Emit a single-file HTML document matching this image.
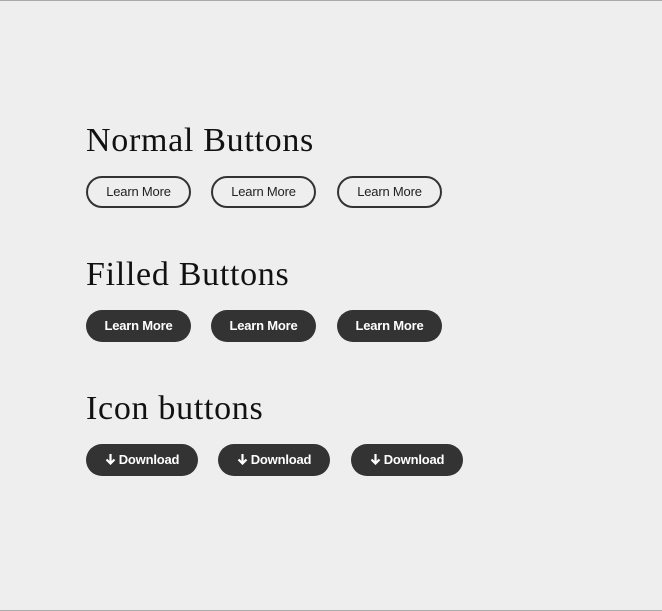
<!DOCTYPE html>
<html><head><style>
html,body{margin:0;padding:0}
body{width:662px;height:611px;background:#eee;position:relative;overflow:hidden;font-family:"Liberation Sans",sans-serif}
.top{position:absolute;left:0;top:0;width:662px;height:1px;background:#aaa}
.bot{position:absolute;left:0;top:610px;width:662px;height:1px;background:#aaa}
h2{position:absolute;left:86px;margin:0;font-family:"Liberation Serif",serif;font-weight:normal;font-size:34px;line-height:40px;color:#111;letter-spacing:0.7px}
.b{position:absolute;box-sizing:border-box;height:32px;border-radius:16px;font-size:13px;display:flex;align-items:center;justify-content:center;padding-bottom:2px;letter-spacing:-0.2px}
.n{width:105px;border:2px solid #333;color:#222}
.f{width:105px;background:#333;color:#fff;font-weight:bold}
.i{width:112px;background:#333;color:#fff;font-weight:bold}
.i svg{margin-right:3px}
</style></head><body>
<div class="top"></div><div class="bot"></div>
<h2 style="top:121px">Normal Buttons</h2>
<div class="b n" style="left:86px;top:176px">Learn More</div>
<div class="b n" style="left:211px;top:176px">Learn More</div>
<div class="b n" style="left:337px;top:176px">Learn More</div>
<h2 style="top:255px">Filled Buttons</h2>
<div class="b f" style="left:86px;top:310px">Learn More</div>
<div class="b f" style="left:211px;top:310px">Learn More</div>
<div class="b f" style="left:337px;top:310px">Learn More</div>
<h2 style="top:389px">Icon buttons</h2>
<div class="b i" style="left:86px;top:444px"><svg width="11" height="12" viewBox="0 0 11 12"><path d="M5.5 1V10.5M1.5 6.5L5.5 10.5L9.5 6.5" stroke="#fff" stroke-width="2.2" fill="none"/></svg>Download</div>
<div class="b i" style="left:218px;top:444px"><svg width="11" height="12" viewBox="0 0 11 12"><path d="M5.5 1V10.5M1.5 6.5L5.5 10.5L9.5 6.5" stroke="#fff" stroke-width="2.2" fill="none"/></svg>Download</div>
<div class="b i" style="left:351px;top:444px"><svg width="11" height="12" viewBox="0 0 11 12"><path d="M5.5 1V10.5M1.5 6.5L5.5 10.5L9.5 6.5" stroke="#fff" stroke-width="2.2" fill="none"/></svg>Download</div>
</body></html>
